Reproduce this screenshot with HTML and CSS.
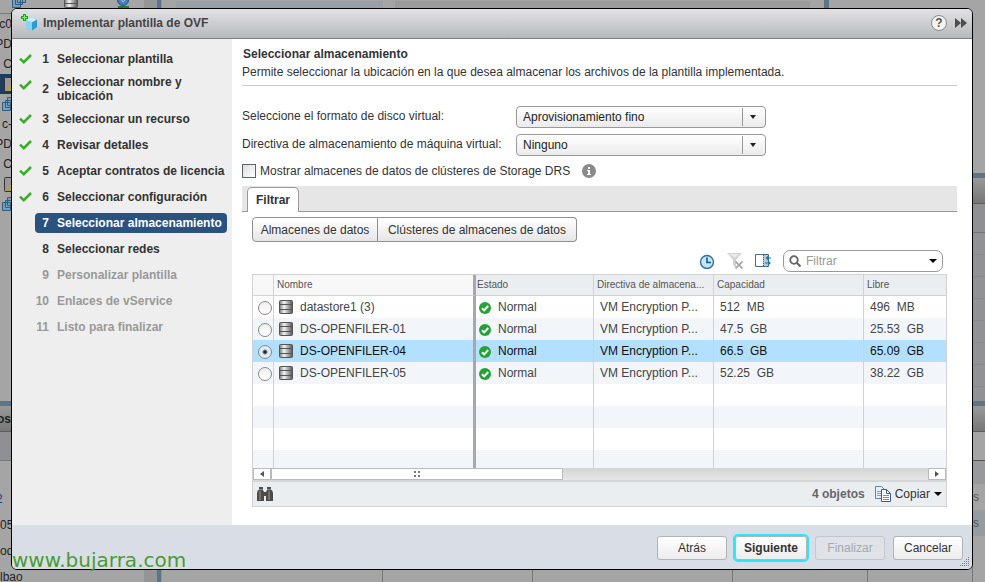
FILE: index.html
```html
<!DOCTYPE html>
<html lang="es">
<head>
    <meta charset="UTF-8">
    <meta name="viewport" content="width=device-width, initial-scale=1.0">
    <title>Implementar plantilla de OVF</title>
    <link rel="stylesheet" href="styles.css">
</head>
<body>

    <!-- Shared icons -->
    <svg class="sprites" aria-hidden="true">
        <defs>
            <linearGradient id="metal" x1="0" x2="1" y1="0" y2="0">
                <stop offset="0" stop-color="#777"/>
                <stop offset=".35" stop-color="#f4f4f4"/>
                <stop offset="1" stop-color="#555"/>
            </linearGradient>
        </defs>
        <symbol id="check" viewBox="0 0 13 10">
            <path d="M1 4.6 L4.8 8.2 L12 1" fill="none" stroke="#3aae2a" stroke-width="2.6"/>
        </symbol>
        <symbol id="disk" viewBox="0 0 14 14">
            <rect x=".5" y=".5" width="13" height="13" rx="1" fill="url(#metal)" stroke="#555"/>
            <path d="M1 4.5h12M1 9.5h12" stroke="#555"/>
        </symbol>
        <symbol id="ok" viewBox="0 0 12 12">
            <circle cx="6" cy="6" r="6" fill="#25a135"/>
            <path d="M3 6.2 L5.2 8.4 L9.2 4" fill="none" stroke="#fff" stroke-width="2"/>
        </symbol>
        <symbol id="vms" viewBox="0 0 14 14">
            <path d="M5.500.500h8v8h-8zM.500 5.500h8v8h-8zM3.500 3.500h7v7h-7z" fill="#7e9db0" stroke="#2b5f86"/>
        </symbol>
        <symbol id="host" viewBox="0 0 12 15">
            <rect x=".5" y=".5" width="10" height="14" rx="1" fill="#999" stroke="#333"/>
            <path d="M7 6 L12 14 H3z" fill="#b5a139"/>
        </symbol>
    </svg>

    <!-- Application behind the dialog -->
    <div class="app" aria-hidden="true">
        <div class="nav">
            <div class="nav-tools">
                <svg class="tool" viewBox="0 0 14 14"><use href="#vms"/></svg>
                <svg class="tool" viewBox="0 0 14 14"><use href="#disk"/></svg>
                <svg class="tool" viewBox="0 0 14 14"><circle cx="7" cy="6" r="5.500" fill="#4c7fb5" stroke="#234f93"/><path d="M4 4l3 4 3-3" stroke="#a9c6df" fill="none"/><path d="M2 13h11" stroke="#2c7d2c" stroke-width="2"/></svg>
            </div>
            <div class="tree">
                <div class="node">c0</div>
                <div class="node">PD</div>
                <div class="node">C</div>
                <div class="node current"><svg width="12" height="15"><use href="#host"/></svg></div>
                <div class="node"><svg width="14" height="14"><use href="#vms"/></svg></div>
                <div class="node">c-</div>
                <div class="node">PD</div>
                <div class="node">C</div>
                <div class="node"><svg width="12" height="15"><use href="#host"/></svg></div>
                <div class="node"><svg width="14" height="14"><use href="#vms"/></svg></div>
            </div>
            <div class="split"></div>
            <div class="panel-head">os</div>
            <div class="panel-sub"></div>
            <div class="recent">
                <div class="recent-link">2</div>
                <div>05</div>
                <div>od</div>
                <div>lbao</div>
            </div>
        </div>
        <div class="nav-scroll"></div>
        <div class="split-v"></div>
        <div class="content">
            <div class="content-top">
                <div class="card"></div>
                <div class="card plain"></div>
            </div>
            <div class="content-bottom">
                <div></div><div></div><div></div><div></div><div></div>
            </div>
        </div>
        <div class="side">
            <div class="side-top"></div>
            <div class="split"></div>
            <div class="panel-head"></div>
            <div class="panel-sub"></div>
            <div class="side-rows"></div>
            <div class="split"></div>
            <div class="panel-head"></div>
            <div class="side-tab"></div>
            <div class="side-list">
                <div class="side-cell">s</div>
                <div class="side-cell">s</div>
            </div>
        </div>
    </div>

    <!-- Wizard dialog -->
    <div class="dialog" role="dialog" aria-labelledby="dialogTitle">
        <header class="titlebar">
            <svg class="title-icon" viewBox="0 0 17 17">
                <path d="M10 3l6 2.500v7.500L11 16.500 5 14V6z" fill="#56b8e4"/>
                <path d="M5 6l6 2.500v8L5 14z" fill="#8ad5f3"/>
                <path d="M5 6l5-3 6 2.500-5 3z" fill="#c5edfb"/>
                <path d="M11 8.500l5-3V13l-5 3.500z" fill="#2f9ace"/>
                <path d="M3.500 0v7M0 3.500h7" stroke="#1f9e25" stroke-width="3"/>
                <path d="M3.500 1v5M1 3.500h5" stroke="#85ef6c"/>
            </svg>
            <h1 id="dialogTitle">Implementar plantilla de OVF</h1>
            <button class="help" type="button" aria-label="Ayuda">?</button>
            <button class="expand" type="button" aria-label="Minimizar">
                <svg width="12" height="10"><path d="M0 0l6 5-6 5zM6 0l6 5-6 5z" fill="#4d4d4d"/></svg>
            </button>
        </header>

        <div class="wizard">
            <ol class="steps">
                <li class="step done"><svg class="tick"><use href="#check"/></svg><div class="step-label"><span class="num">1</span><span>Seleccionar plantilla</span></div></li>
                <li class="step done tall"><svg class="tick"><use href="#check"/></svg><div class="step-label"><span class="num">2</span><span>Seleccionar nombre y ubicación</span></div></li>
                <li class="step done"><svg class="tick"><use href="#check"/></svg><div class="step-label"><span class="num">3</span><span>Seleccionar un recurso</span></div></li>
                <li class="step done"><svg class="tick"><use href="#check"/></svg><div class="step-label"><span class="num">4</span><span>Revisar detalles</span></div></li>
                <li class="step done"><svg class="tick"><use href="#check"/></svg><div class="step-label"><span class="num">5</span><span>Aceptar contratos de licencia</span></div></li>
                <li class="step done"><svg class="tick"><use href="#check"/></svg><div class="step-label"><span class="num">6</span><span>Seleccionar configuración</span></div></li>
                <li class="step active"><div class="step-label"><span class="num">7</span><span>Seleccionar almacenamiento</span></div></li>
                <li class="step"><div class="step-label"><span class="num">8</span><span>Seleccionar redes</span></div></li>
                <li class="step pending"><div class="step-label"><span class="num">9</span><span>Personalizar plantilla</span></div></li>
                <li class="step pending"><div class="step-label"><span class="num">10</span><span>Enlaces de vService</span></div></li>
                <li class="step pending"><div class="step-label"><span class="num">11</span><span>Listo para finalizar</span></div></li>
            </ol>

            <main class="page">
                <div class="intro">
                    <h2>Seleccionar almacenamiento</h2>
                    <p>Permite seleccionar la ubicación en la que desea almacenar los archivos de la plantilla implementada.</p>
                </div>

                <div class="field">
                    <label for="format">Seleccione el formato de disco virtual:</label>
                    <div class="select">
                        <select id="format"><option>Aprovisionamiento fino</option></select>
                    </div>
                </div>
                <div class="field">
                    <label for="policy">Directiva de almacenamiento de máquina virtual:</label>
                    <div class="select">
                        <select id="policy"><option>Ninguno</option></select>
                    </div>
                </div>
                <div class="drs">
                    <input type="checkbox" id="drs">
                    <label for="drs">Mostrar almacenes de datos de clústeres de Storage DRS</label>
                    <svg class="info" viewBox="0 0 14 14"><circle cx="7" cy="7" r="7" fill="#8a8a8a"/><path d="M5 6h3v4h1v1H5v-1h1V7H5zM6 3h2v2H6z" fill="#fff"/></svg>
                </div>

                <div class="tabs">
                    <button class="tab" type="button">Filtrar</button>
                </div>

                <div class="panel">
                    <div class="toggle">
                        <button type="button">Almacenes de datos</button>
                        <button type="button">Clústeres de almacenes de datos</button>
                    </div>

                    <div class="toolbar">
                        <svg class="tb-icon" viewBox="0 0 16 16">
                            <circle cx="8" cy="9" r="6.500" fill="#c3e6f8" stroke="#2f6f9f" stroke-width="1.400"/>
                            <path d="M8 4.500V9.500H12" fill="none" stroke="#155a8c" stroke-width="1.600"/>
                        </svg>
                        <svg class="tb-icon" viewBox="0 0 16 16">
                            <path d="M0 0h15L9 7v8L6 12V7z" fill="#d2d2d2"/>
                            <path d="M2 1h10L8 5z" fill="#ebebeb"/>
                            <path d="M8.500 8.500l7 7M15.500 8.500l-7 7" stroke="#aaa" stroke-width="1.800"/>
                        </svg>
                        <svg class="tb-icon" viewBox="0 0 16 16">
                            <path d="M.500 1.500h13v12H.500z" fill="#fff" stroke="#4a6a86"/>
                            <path d="M8 2h5v11H8z" fill="#c0c9d1"/>
                            <path d="M8.500 2v12" stroke="#34536e" stroke-dasharray="1 1"/>
                            <path d="M11 5h5M13.500 3L11.500 5l2 2M10 10h5M13 8l2 2-2 2" fill="none" stroke="#1479bd" stroke-width="1.200"/>
                        </svg>
                        <div class="search">
                            <svg width="12" height="12"><circle cx="5" cy="5" r="3.800" fill="none" stroke="#666" stroke-width="1.800"/><path d="M8 8l3.500 3.500" stroke="#666" stroke-width="2.200"/></svg>
                            <input type="text" placeholder="Filtrar" aria-label="Filtrar">
                            <svg width="8" height="4"><path d="M0 0h8L4 4z" fill="#000"/></svg>
                        </div>
                    </div>

                    <div class="grid">
                        <table>
                            <colgroup>
                                <col class="c-pick"><col class="c-name"><col class="c-state"><col class="c-policy"><col class="c-cap"><col class="c-free">
                            </colgroup>
                            <thead>
                                <tr><th></th><th>Nombre</th><th>Estado</th><th>Directiva de almacena...</th><th>Capacidad</th><th>Libre</th></tr>
                            </thead>
                            <tbody>
                                <tr>
                                    <td><input type="radio" name="ds" aria-label="datastore1 (3)"></td>
                                    <td><svg class="disk"><use href="#disk"/></svg>datastore1 (3)</td>
                                    <td><svg class="ok"><use href="#ok"/></svg>Normal</td>
                                    <td>VM Encryption P...</td><td>512&nbsp; MB</td><td>496&nbsp; MB</td>
                                </tr>
                                <tr>
                                    <td><input type="radio" name="ds" aria-label="DS-OPENFILER-01"></td>
                                    <td><svg class="disk"><use href="#disk"/></svg>DS-OPENFILER-01</td>
                                    <td><svg class="ok"><use href="#ok"/></svg>Normal</td>
                                    <td>VM Encryption P...</td><td>47.5&nbsp; GB</td><td>25.53&nbsp; GB</td>
                                </tr>
                                <tr class="selected">
                                    <td><input type="radio" name="ds" aria-label="DS-OPENFILER-04" checked></td>
                                    <td><svg class="disk"><use href="#disk"/></svg>DS-OPENFILER-04</td>
                                    <td><svg class="ok"><use href="#ok"/></svg>Normal</td>
                                    <td>VM Encryption P...</td><td>66.5&nbsp; GB</td><td>65.09&nbsp; GB</td>
                                </tr>
                                <tr>
                                    <td><input type="radio" name="ds" aria-label="DS-OPENFILER-05"></td>
                                    <td><svg class="disk"><use href="#disk"/></svg>DS-OPENFILER-05</td>
                                    <td><svg class="ok"><use href="#ok"/></svg>Normal</td>
                                    <td>VM Encryption P...</td><td>52.25&nbsp; GB</td><td>38.22&nbsp; GB</td>
                                </tr>
                                <tr><td></td><td></td><td></td><td></td><td></td><td></td></tr>
                                <tr><td></td><td></td><td></td><td></td><td></td><td></td></tr>
                                <tr><td></td><td></td><td></td><td></td><td></td><td></td></tr>
                                <tr class="last"><td></td><td></td><td></td><td></td><td></td><td></td></tr>
                            </tbody>
                        </table>
                        <div class="scrollbar">
                            <button type="button" aria-label="Izquierda"><svg width="4" height="6"><path d="M4 0v6L0 3z" fill="#555"/></svg></button>
                            <div class="thumb"><svg width="6" height="6"><path d="M0 0h2v2H0zM4 0h2v2H4zM0 4h2v2H0zM4 4h2v2H4z" fill="#777"/></svg></div>
                            <div class="track"></div>
                            <button type="button" aria-label="Derecha"><svg width="4" height="6"><path d="M0 0v6l4-3z" fill="#555"/></svg></button>
                        </div>
                        <div class="grid-foot">
                            <svg class="find" viewBox="0 0 16 14">
                                <path d="M2 0h4v3l1 2v9H0V6l1-3h1zM10 0h4v3h1l1 3v8H9V5l1-2z" fill="#4b4b4b"/>
                                <path d="M6 5h4v4H6z" fill="#4b4b4b"/>
                                <path d="M3 4v9M12 4v9" stroke="#999"/>
                                <path d="M2 2.500h4M10 2.500h4" stroke="#8495a0"/>
                            </svg>
                            <span class="count">4 objetos</span>
                            <button class="copy" type="button">
                                <svg width="16" height="16">
                                    <path d="M.500.500h6l3 3v9h-9z" fill="#e7f1f9" stroke="#5b86ad"/>
                                    <path d="M2 5.500h4M2 7.500h4M2 9.500h4" stroke="#7da3c4"/>
                                    <path d="M6.500 3.500h5l4 4v8h-9z" fill="#fff" stroke="#34608c"/>
                                    <path d="M11.500 3.500v4h4" fill="none" stroke="#34608c"/>
                                    <path d="M8 9.500h6M8 11.500h6M8 13.500h6" stroke="#6c96bd"/>
                                </svg>
                                Copiar
                                <svg width="8" height="4"><path d="M0 0h8L4 4z" fill="#000"/></svg>
                            </button>
                        </div>
                    </div>
                </div>
            </main>
        </div>

        <footer class="actions">
            <button type="button">Atrás</button>
            <button type="button" class="primary">Siguiente</button>
            <button type="button" disabled>Finalizar</button>
            <button type="button">Cancelar</button>
            <svg class="grip" width="10" height="10"><path d="M8 .500h2M6 2.500h4M4 4.500h6M2 6.500h8M0 8.500h10" stroke="#777" stroke-dasharray="1 1"/></svg>
        </footer>
    </div>

    <div class="watermark">www.bujarra.com</div>

</body>
</html>
```

FILE: styles.css
```css
* {
    box-sizing: border-box;
}
body {
    margin: 0;
    height: 100vh;
    overflow: hidden;
    position: relative;
    background: #a5a5a5;
    color: #333;
    font-family: "Liberation Sans", Arial, sans-serif;
    font-size: 12px;
    line-height: 14px;
}
button, input, select {
    font: inherit;
    color: inherit;
    margin: 0;
}
svg {
    display: block;
    flex: none;
}
h1, h2, p, ol {
    margin: 0;
    padding: 0;
    font-size: 12px;
}
.sprites {
    position: absolute;
    width: 0;
    height: 0;
}

/* Dimmed application */
.app {
    display: flex;
    height: 100%;
    color: #222;
}
.nav {
    width: 144px;
    overflow: hidden;
}
.nav-tools {
    display: flex;
    gap: 38px;
    height: 14px;
    padding-left: 12px;
    border-bottom: 1px solid #777;
    overflow: hidden;
}
.tool {
    width: 14px;
    height: 14px;
    margin-top: -6px;
}
.tree {
    height: 387px;
}
.node {
    display: flex;
    justify-content: flex-end;
    align-items: center;
    width: 12px;
    height: 20px;
}
.node svg {
    margin-right: -4px;
}
.current {
    background: #1e3d5e;
}
.split {
    height: 5px;
    background: #5d7586;
}
.panel-head {
    height: 26px;
    padding: 6px 0;
    background: linear-gradient(#999, #777);
    border-bottom: 1px solid #5e5e5e;
    font-weight: bold;
    text-indent: -3px;
}
.panel-sub {
    height: 29px;
    background: #8f9094;
    border-bottom: 1px solid #777;
}
.recent {
    padding-top: 25px;
    line-height: 26px;
}
.recent-link {
    color: #1d3d7d;
    text-indent: -4px;
}
.nav-scroll {
    width: 12px;
    background: #959595;
}
.split-v {
    width: 6px;
    background: #5d7586;
    border: solid #8b979f;
    border-width: 0 1px;
}
.content {
    flex: 1;
    display: flex;
    flex-direction: column;
    justify-content: space-between;
}
.content-top {
    display: flex;
    gap: 12px;
    padding: 1px 14px;
    border-right: 5px solid #5d7586;
    margin-right: 144px;
}
.card {
    flex: 1;
    height: 40px;
    background: #989fa5;
}
.plain {
    flex: 2;
    background: #9b9b9b;
}
.content-bottom {
    display: grid;
    grid-template-columns: 221px 150px 200px 135px 1fr;
    height: 20px;
}
.content-bottom div {
    border-right: 1px solid #777;
}
.side {
    width: 12px;
    overflow: hidden;
}
.side-top {
    height: 173px;
}
.side-rows {
    height: 168px;
    background: repeating-linear-gradient(#919296 0 21px, #87888c 21px 22px);
}
.side-tab {
    height: 29px;
    border-bottom: 1px solid #555;
}
.side-list {
    padding-top: 23px;
    background: #98999c;
    line-height: 26px;
}
.side-cell {
    height: 26px;
    background: #a5a5a5;
    color: #555;
}
.side-cell + .side-cell {
    background: #949ba1;
}

/* Dialog */
.dialog {
    position: absolute;
    inset: 8px 12px 12px 11px;
    display: flex;
    flex-direction: column;
    overflow: hidden;
    background: #fff;
    border: 1px solid #000;
    border-radius: 6px;
}
.titlebar {
    display: flex;
    align-items: center;
    height: 30px;
    padding: 0 5px 2px 9px;
    background: linear-gradient(#e3e3e6, #b7b8bc);
    border-bottom: 1px solid #7f7f7f;
}
.title-icon {
    width: 17px;
    height: 17px;
}
.titlebar h1 {
    flex: 1;
    padding-left: 5px;
    color: #444;
}
.help {
    width: 16px;
    height: 16px;
    padding: 0;
    background: #f4f4f4;
    border: 1px solid #888;
    border-radius: 50%;
    color: #555;
    font-weight: bold;
    line-height: 14px;
}
.expand {
    margin-left: 8px;
    padding: 0;
    background: none;
    border: none;
}
.wizard {
    flex: 1;
    display: flex;
    min-height: 0;
}
.steps {
    width: 220px;
    padding: 7px 5px 0 7px;
    background: #eee;
    list-style: none;
    font-weight: bold;
    white-space: nowrap;
}
.step {
    display: flex;
    align-items: center;
    justify-content: flex-end;
    height: 26px;
}
.tall {
    height: 34px;
    white-space: normal;
}
.tick {
    width: 13px;
    height: 10px;
    margin-right: 3px;
}
.tall .tick {
    margin-bottom: 8px;
}
.step-label {
    display: flex;
    align-items: center;
    width: 192px;
    min-height: 20px;
    border-radius: 4px;
}
.tall .step-label {
    padding-right: 40px;
}
.num {
    flex: none;
    width: 14px;
    margin-right: 8px;
    text-align: right;
}
.active .step-label {
    background: #2a527e;
    color: #fff;
}
.pending {
    color: #999;
}
.page {
    flex: 1;
    min-width: 0;
    padding: 8px 15px 0 10px;
}
.intro {
    height: 39px;
    border-bottom: 1px solid #ccc;
    margin-bottom: 20px;
}
.intro h2 {
    padding-left: 1px;
    line-height: 14px;
}
.intro p {
    line-height: 22px;
}
.field {
    display: flex;
    margin-bottom: 6px;
}
.field label {
    width: 274px;
    line-height: 20px;
}
.select {
    position: relative;
    width: 250px;
}
.select select {
    appearance: none;
    display: block;
    width: 100%;
    height: 22px;
    padding: 0 28px 0 6px;
    background: linear-gradient(#fff, #ebebeb);
    border: 1px solid #999;
    border-radius: 4px;
    color: #222;
}
.select::before {
    content: "";
    position: absolute;
    top: 2px;
    bottom: 2px;
    right: 23px;
    border-left: 1px solid #999;
}
.select::after {
    content: "";
    position: absolute;
    top: 9px;
    right: 10px;
    border: 3px solid transparent;
    border-top: 4px solid #222;
    border-bottom: none;
    pointer-events: none;
}
.drs {
    display: flex;
    align-items: center;
    gap: 4px;
    height: 14px;
    margin: 8px 0;
}
.drs input {
    appearance: none;
    width: 14px;
    height: 14px;
    background: linear-gradient(135deg, #ddd, #fff);
    border: 1px solid #5d6468;
}
.info {
    width: 14px;
    height: 14px;
    margin-left: 8px;
}
.tabs {
    height: 26px;
    padding: 1px 5px 0;
    background: #e6e6e6;
    border-bottom: 1px solid #999;
}
.tab {
    height: 25px;
    padding: 0 8px;
    background: #fff;
    border: 1px solid #999;
    border-bottom: none;
    border-radius: 5px 5px 0 0;
    font-weight: bold;
}
.panel {
    padding: 5px 10px 0;
}
.toggle {
    display: flex;
}
.toggle button {
    width: 126px;
    height: 25px;
    padding: 0;
    background: linear-gradient(#fff, #e6e6e6);
    border: 1px solid #8f8f8f;
    border-radius: 4px 0 0 4px;
}
.toggle button + button {
    width: 199px;
    border-left: none;
    border-radius: 0 4px 4px 0;
}
.toolbar {
    display: flex;
    align-items: center;
    justify-content: flex-end;
    gap: 12px;
    height: 22px;
    margin: 8px 4px 2px 0;
}
.tb-icon {
    width: 16px;
    height: 16px;
}
.search {
    display: flex;
    align-items: center;
    width: 160px;
    height: 22px;
    padding: 0 5px;
    border: 1px solid #999;
    border-radius: 7px;
}
.search input {
    flex: 1;
    min-width: 0;
    padding: 0 5px;
    background: none;
    border: none;
}
.search input::placeholder {
    color: #999;
}
.grid {
    border: 1px solid #d0d2d4;
}
table {
    width: 100%;
    table-layout: fixed;
    border-collapse: separate;
    border-spacing: 0;
    color: #444;
}
.c-pick {
    width: 21px;
}
.c-state {
    width: 118px;
}
.c-policy {
    width: 120px;
}
.c-cap {
    width: 150px;
}
.c-free {
    width: 82px;
}
th {
    height: 21px;
    padding: 0 3px;
    background: #ebeef1;
    border-right: 1px solid #d0d2d4;
    border-bottom: 1px solid #d0d2d4;
    color: #555;
    font-size: 10px;
    font-weight: normal;
    text-align: left;
    white-space: nowrap;
}
th:nth-child(-n+2) {
    background: #f8f8f8;
}
th:nth-child(3) {
    padding-left: 1px;
}
td {
    height: 22px;
    padding: 0 6px;
    border-right: 1px solid #d0d2d4;
    white-space: nowrap;
}
th:nth-child(2), td:nth-child(2) {
    border-right: 3px solid #a6a9ab;
}
th:last-child, td:last-child {
    border-right: none;
}
td:nth-child(1) {
    padding: 0 0 0 5px;
}
td:nth-child(2) {
    padding-left: 5px;
}
td:nth-child(3) {
    padding-left: 3px;
}
tbody tr:nth-child(even) {
    background: #f2f6fb;
}
tbody .selected {
    background: #b3e0ff;
    color: #111;
}
.last td {
    height: 18px;
}
td input {
    appearance: none;
    display: block;
    width: 14px;
    height: 14px;
    margin-top: 2px;
    background: linear-gradient(#eee, #fff);
    border: 1px solid #888;
    border-radius: 50%;
}
td input:checked {
    background: radial-gradient(circle, #222 0 1px, #dcecf7 3px);
}
td svg {
    display: inline-block;
    vertical-align: middle;
}
.disk {
    width: 14px;
    height: 14px;
    margin-right: 7px;
}
.ok {
    width: 12px;
    height: 12px;
    margin-right: 7px;
}
.scrollbar {
    display: flex;
    height: 12px;
}
.scrollbar button, .thumb {
    display: flex;
    align-items: center;
    justify-content: center;
    width: 18px;
    padding: 0;
    background: #fff;
    border: 1px solid #bbb;
}
.scrollbar .thumb {
    width: 292px;
}
.track {
    flex: 1;
    background: linear-gradient(#d4d4d4, #e6e6e6);
}
.grid-foot {
    display: flex;
    align-items: center;
    height: 26px;
    padding: 0 4px;
    background: #ebeef1;
    border-top: 2px solid #d5d6d7;
}
.find {
    width: 16px;
    height: 14px;
}
.count {
    margin-left: auto;
    color: #666;
    font-weight: bold;
}
.copy {
    display: flex;
    align-items: center;
    gap: 4px;
    margin-left: 10px;
    padding: 0;
    background: none;
    border: none;
}
.actions {
    position: relative;
    display: flex;
    align-items: center;
    justify-content: flex-end;
    gap: 8px;
    height: 44px;
    padding: 2px 9px 0;
    background: #d9dee6;
}
.actions button {
    width: 70px;
    height: 24px;
    padding: 0;
    background: linear-gradient(#fff, #ececec);
    border: 1px solid #b0b4b9;
    border-radius: 3px;
}
.actions .primary {
    width: 72px;
    outline: 2px solid #2ae8fb;
    font-weight: bold;
}
.actions button:disabled {
    background: #dfe3e8;
    border-color: #c3c8ce;
    color: #a5a9ae;
}
.grip {
    position: absolute;
    right: 2px;
    bottom: 2px;
}
.watermark {
    position: absolute;
    left: 12px;
    bottom: 10px;
    color: #4a9b35;
    font-family: "DejaVu Sans", sans-serif;
    font-size: 20px;
    line-height: 24px;
}
```
